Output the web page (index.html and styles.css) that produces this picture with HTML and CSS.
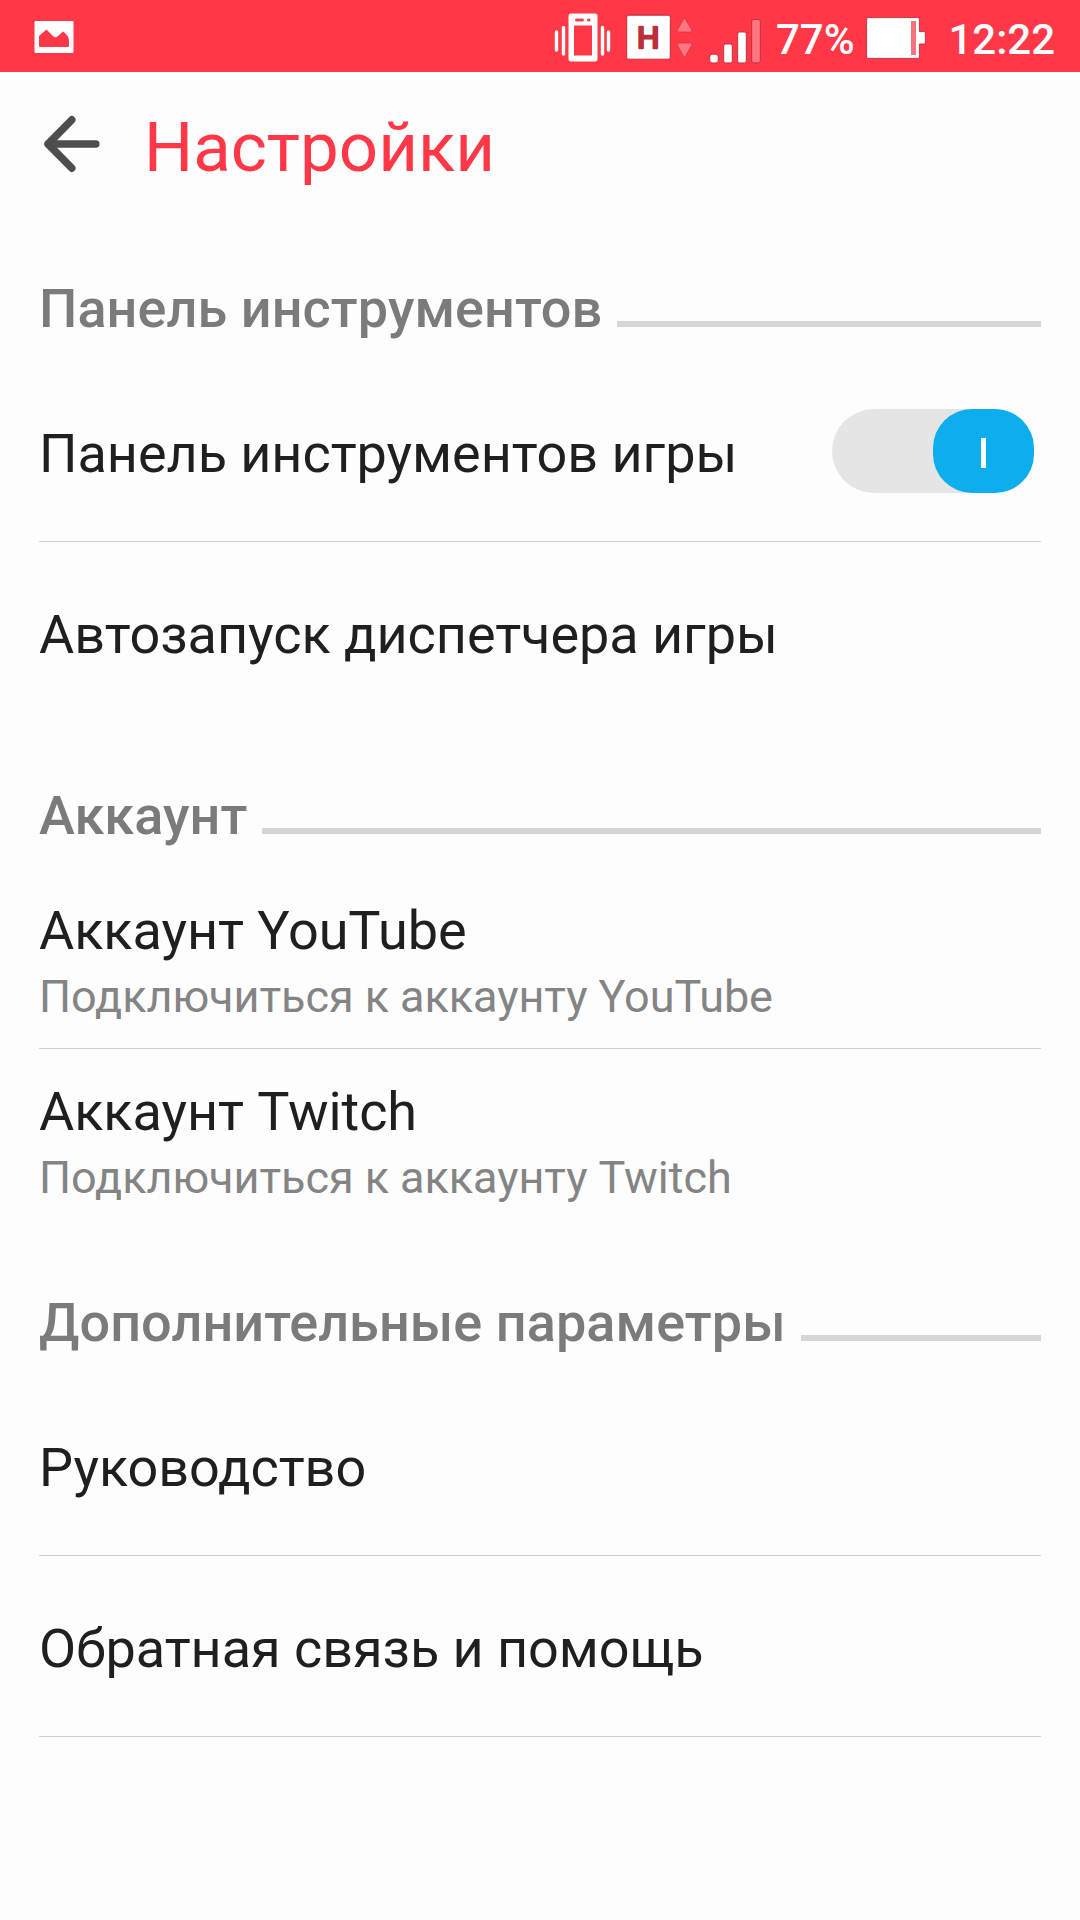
FILE: index.html
```html
<!DOCTYPE html>
<html lang="ru">
<head>
<meta charset="utf-8">
<title>Настройки</title>
<link rel="stylesheet" href="styles.css">
</head>
<body>
<div class="status-bar">
  <svg class="icon-picture" width="40" height="34" viewBox="34 20 40 34">
    <rect x="34.5" y="21" width="39" height="32" rx="1" fill="#fff"/>
    <path d="M39 36L46.5 29.5L53 36Q55.5 38.5 58 36L63 31.5L66 34Q69 37 69 40V46Q69 47 68 47H40Q39 47 39 46Z" fill="#ff3747"/>
  </svg>
  <div class="status-right">
    <svg class="icon-vibrate" width="58" height="50" viewBox="554 13 58 50">
      <path fill-rule="evenodd" d="M571 13.5H595Q597.5 13.5 597.5 16V59Q597.5 61.5 595 61.5H571Q568.5 61.5 568.5 59V16Q568.5 13.5 571 13.5ZM574 25.5V55.500H592V25.500Z" fill="#fff"/>
      <path d="M576.500 20H582.500M588.500 20H589" stroke="#e84352" stroke-width="3" stroke-linecap="round"/>
      <path d="M556.500 32V50M563.500 27.500V54M602.500 27.500V54M608.500 32V50" stroke="#fff" stroke-width="3.400" stroke-linecap="round"/>
    </svg>
    <svg class="icon-network" width="68" height="46" viewBox="626 14 68 46">
      <rect x="626.700" y="15.200" width="43.600" height="44" rx="2" fill="#fff" stroke="#b92f3c"/>
      <text class="network-type" x="648.300" y="48.400" text-anchor="middle" textLength="22.500" lengthAdjust="spacingAndGlyphs">H</text>
      <path d="M684.500 18.500Q685.500 19 686 20L691.500 29.500Q692.500 32 690.500 32H678.500Q676.500 32 677.500 29.500L683 20Q683.500 19 684.500 18.500Z" fill="#ff7681" stroke="#d13440" stroke-width=".8"/>
      <path d="M684.500 57Q685.500 56.500 686 55.500L691.500 45.500Q692.500 43 690.500 43H678.500Q676.500 43 677.500 45.500L683 55.500Q683.500 56.500 684.500 57Z" fill="#ff7681" stroke="#d13440" stroke-width=".8"/>
    </svg>
    <svg class="icon-signal" width="52" height="46" viewBox="709 18 52 46">
      <g fill="#fff" stroke="#b92f3c" stroke-width=".9">
        <rect x="709.800" y="54.300" width="8.400" height="8.600" rx="2.500"/>
        <rect x="723.700" y="44" width="8.600" height="18.900" rx="2"/>
        <rect x="737.700" y="32" width="8.600" height="30.900" rx="2"/>
        <rect x="751.700" y="19.500" width="8.600" height="43.400" rx="2" fill="#ff7681"/>
      </g>
    </svg>
    <span class="battery-level">77%</span>
    <svg class="icon-battery" width="60" height="43" viewBox="866 17 60 43">
      <path d="M868 17.600H918Q919.400 17.600 919.400 19V31.600H925.300V44H919.400V57Q919.400 58.400 918 58.400H868Q866.600 58.400 866.600 57V19Q866.600 17.600 868 17.600Z" fill="#fff" stroke="#b92f3c" stroke-width=".9"/>
      <rect x="911" y="21" width="5" height="34" fill="#f4737d"/>
    </svg>
    <span class="clock">12:22</span>
  </div>
</div>

<header class="app-bar">
  <svg class="back" width="58" height="58" viewBox="43 115 58 58" fill="none" stroke="#4d4d4d" stroke-width="7.500" stroke-linecap="round" stroke-linejoin="round">
    <path d="M71.800 119.800L48 144L71.800 168.200M48 144H95.800"/>
    <path d="M48 144L54 138V150Z" fill="#4d4d4d" stroke="none"/>
  </svg>
  <h1 class="title">Настройки</h1>
</header>

<main class="settings">
  <section class="section">
    <h2 class="section-title">Панель инструментов</h2>
    <div class="row divided">
      <div class="label">Панель инструментов игры</div>
      <div class="toggle"><div class="knob"><div class="mark"></div></div></div>
    </div>
    <div class="row">
      <div class="label">Автозапуск диспетчера игры</div>
    </div>
  </section>
  <section class="section">
    <h2 class="section-title">Аккаунт</h2>
    <div class="row divided">
      <div class="lines">
        <div class="label">Аккаунт YouTube</div>
        <div class="summary">Подключиться к аккаунту YouTube</div>
      </div>
    </div>
    <div class="row">
      <div class="lines">
        <div class="label">Аккаунт Twitch</div>
        <div class="summary">Подключиться к аккаунту Twitch</div>
      </div>
    </div>
  </section>
  <section class="section">
    <h2 class="section-title">Дополнительные параметры</h2>
    <div class="row divided">
      <div class="label">Руководство</div>
    </div>
    <div class="row divided">
      <div class="label">Обратная связь и помощь</div>
    </div>
  </section>
</main>
</body>
</html>
```
FILE: styles.css
```css
* {
  box-sizing: border-box;
}

body {
  margin: 0;
  width: 1080px;
  height: 1920px;
  overflow: hidden;
  background: #fdfdfd;
  color: #1f1f1f;
  font-family: Roboto, sans-serif;
}

svg {
  display: block;
  flex: none;
}

.status-bar {
  display: flex;
  justify-content: space-between;
  align-items: flex-start;
  height: 72px;
  padding: 0 24px 0 34px;
  background: #ff3747;
  color: #fff;
  font-size: 42px;
  font-weight: 500;
  line-height: 50px;
}

.icon-picture {
  margin-top: 20px;
}

.status-right {
  display: flex;
  align-items: flex-start;
}

.icon-vibrate {
  margin: 13px 14px 0 0;
}

.icon-network {
  margin: 14px 15px 0 0;
}

.network-type {
  fill: #b92f3c;
  stroke: #b92f3c;
  stroke-width: 2.4px;
  stroke-linejoin: round;
  font-size: 29.5px;
  font-weight: 400;
}

.icon-signal {
  margin-top: 18px;
}

.battery-level {
  width: 105px;
  padding: 15px 0 0 15px;
}

.icon-battery {
  margin-top: 17px;
}

.clock {
  width: 130px;
  padding: 15px 1px 0 0;
  text-align: right;
}

.app-bar {
  display: flex;
  align-items: center;
  height: 144px;
  padding-left: 43px;
}

.title {
  margin: 7px 0 0 43px;
  color: #ff3747;
  font-size: 69px;
  font-weight: 400;
  line-height: 81px;
}

.settings {
  padding: 0 39px;
}

.section-title {
  display: flex;
  align-items: flex-end;
  gap: 15px;
  height: 145px;
  margin: 0;
  padding-bottom: 21px;
  color: #7b7b7b;
  font-size: 54px;
  font-weight: 500;
  letter-spacing: 0.07px;
  line-height: 63px;
  white-space: nowrap;
}

.section-title::after {
  content: "";
  flex: 1;
  height: 6px;
  margin-bottom: 13px;
  background: #d5d6d7;
}

.row {
  display: flex;
  align-items: center;
  justify-content: space-between;
  height: 181px;
  border-bottom: 1px solid transparent;
}

.divided {
  border-bottom-color: #cfcfcf;
}

.lines {
  padding-top: 2px;
}

.label {
  padding-top: 4px;
  font-size: 54px;
  letter-spacing: -0.05px;
  line-height: 63px;
  white-space: nowrap;
}

.summary {
  margin-top: 8px;
  color: #848484;
  font-size: 45px;
  letter-spacing: -0.05px;
  line-height: 53px;
  white-space: nowrap;
}

.toggle {
  display: flex;
  justify-content: flex-end;
  width: 202px;
  height: 84px;
  margin-right: 7px;
  border-radius: 42px;
  background: #e5e5e5;
}

.knob {
  display: flex;
  align-items: center;
  justify-content: center;
  width: 101px;
  height: 84px;
  border-radius: 39px;
  background: #0caeed;
}

.mark {
  width: 5px;
  height: 30px;
  margin-top: 4px;
  background: #fff;
}
```
